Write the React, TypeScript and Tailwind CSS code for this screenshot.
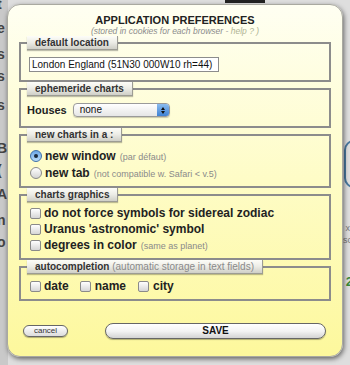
import React from 'react';

const FONT = { fontFamily: '"Liberation Sans", Arial, sans-serif' };

function Legend({ children }: { children: React.ReactNode }) {
  return (
    <legend className="h-[14px] px-[8px] text-[10px] font-bold leading-[14px] text-[#333] bg-gradient-to-b from-[#fdfdf8] via-[#ecece6] to-[#cfcfc7] border-b border-r border-[#9c9c94] shadow-[0_1px_1px_rgba(0,0,0,0.25)]">
      {children}
    </legend>
  );
}

function Radio({ checked }: { checked?: boolean }) {
  if (checked) {
    return (
      <span className="flex h-[12px] w-[12px] shrink-0 items-center justify-center rounded-full border border-[#3d6fa8] bg-gradient-to-b from-[#6aa6e6] to-[#b9dcf8]">
        <span className="h-[4px] w-[4px] rounded-full bg-[#1b2a3a]" />
      </span>
    );
  }
  return (
    <span className="h-[12px] w-[12px] shrink-0 rounded-full border border-[#8a8a8a] bg-gradient-to-b from-[#ffffff] to-[#d4d4d4]" />
  );
}

function Checkbox() {
  return (
    <span className="inline-block h-[11px] w-[11px] shrink-0 rounded-[2px] border border-[#8a8a8a] bg-gradient-to-b from-[#ffffff] to-[#d6d6d6]" />
  );
}

function Note({ children }: { children: React.ReactNode }) {
  return <span className="ml-[4px] text-[9px] font-normal text-[#8a8a8a]">{children}</span>;
}

export default function App() {
  const leftLetters = ['t', 'e', 's', 's', 's', 'B', '(', 'A', 'n', 'o'];
  const leftTops = [-6, 18, 44, 66, 95, 138, 160, 184, 210, 232];

  return (
    <div className="relative h-[365px] w-[350px] overflow-hidden bg-[#dedede]" style={FONT}>
      {/* underlying page, partly visible */}
      <div className="absolute left-0 top-0 h-[365px] w-[8px] bg-[#c9c9c9]" />
      {leftLetters.map((l, i) => (
        <span
          key={i}
          className="absolute left-[-3px] text-[14px] font-bold text-[#444]"
          style={{ top: leftTops[i] }}
        >
          {l}
        </span>
      ))}
      <div className="absolute left-[225px] top-0 h-[3px] w-[40px] bg-[#222]" />
      <div className="absolute right-[-14px] top-[140px] h-[48px] w-[20px] rounded-full border-2 border-[#4a7aa0]" />
      <span className="absolute right-[0px] top-[222px] text-[9px] text-[#777]">x</span>
      <span className="absolute right-[-2px] top-[234px] text-[9px] text-[#777]">sc</span>
      <span className="absolute right-[-3px] top-[272px] text-[13px] font-bold text-[#3a8a3a]">2</span>

      {/* dialog */}
      <div className="absolute left-[7px] top-[4px] flex h-[353px] w-[336px] flex-col rounded-[13px] border border-[#a9a9a0] bg-gradient-to-b from-[#fffff2] via-[#fefcc6] to-[#fdf89c] px-[11px] pt-[9px] shadow-[1px_2px_5px_rgba(0,0,0,0.55)]">
        <div className="text-center text-[11px] font-bold leading-[13px] text-[#222]">APPLICATION PREFERENCES</div>
        <div className="-mt-[1px] text-center text-[8.5px] italic leading-[10px] text-[#8c8c8c]">
          (stored in cookies for each browser - <span className="text-[#b0b494]">help ? )</span>
        </div>

        <fieldset className="border-2 border-[#8c8c8c] pl-[6px] pr-[8px] pb-[8px] pt-[7px]">
          <Legend>default location</Legend>
          <div className="ml-[2px] h-[15px] w-[190px] border border-[#8c8c8c] bg-white px-[2px] text-[10px] leading-[13px] text-[#111]">
            London England (51N30 000W10 rh=44)
          </div>
        </fieldset>

        <fieldset className="border-2 border-[#8c8c8c] pl-[6px] pr-[8px] pb-[8px] pt-[6px]">
          <Legend>ephemeride charts</Legend>
          <div className="flex h-[16px] items-center gap-[6px]">
            <span className="text-[11px] font-bold text-[#222]">Houses</span>
            <div className="flex h-[14px] w-[97px] items-center rounded-[4px] border border-[#9a9a9a] bg-gradient-to-b from-white to-[#e6e6e6] shadow-[0_1px_1px_rgba(0,0,0,0.2)]">
              <span className="flex-1 pl-[6px] text-[10px] leading-[12px] text-[#111]">none</span>
              <span className="flex h-full w-[12px] flex-col items-center justify-center gap-[1px] rounded-r-[3px] bg-gradient-to-b from-[#8bbcee] to-[#3f82d4]">
                <span className="h-0 w-0 border-x-[2.5px] border-b-[3px] border-x-transparent border-b-[#111]" />
                <span className="h-0 w-0 border-x-[2.5px] border-t-[3px] border-x-transparent border-t-[#111]" />
              </span>
            </div>
          </div>
        </fieldset>

        <fieldset className="border-2 border-[#8c8c8c] pl-[6px] pr-[8px] pb-[5px] pt-[5px]">
          <Legend>new charts in a :</Legend>
          <div className="ml-[3px] flex h-[17px] items-center gap-[3px] text-[12px] font-bold text-[#222]">
            <Radio checked />
            <span>new window<Note>(par défaut)</Note></span>
          </div>
          <div className="ml-[3px] flex h-[17px] items-center gap-[3px] text-[12px] font-bold text-[#222]">
            <Radio />
            <span>new tab<Note>(not compatible w. Safari &lt; v.5)</Note></span>
          </div>
        </fieldset>

        <fieldset className="border-2 border-[#8c8c8c] pl-[6px] pr-[8px] pb-[5px] pt-[3px]">
          <Legend>charts graphics</Legend>
          <div className="ml-[3px] flex h-[16px] items-center gap-[3px] text-[12px] font-bold text-[#222]">
            <Checkbox />
            <span>do not force symbols for sidereal zodiac</span>
          </div>
          <div className="ml-[3px] flex h-[16px] items-center gap-[3px] text-[12px] font-bold text-[#222]">
            <Checkbox />
            <span>Uranus 'astronomic' symbol</span>
          </div>
          <div className="ml-[3px] flex h-[16px] items-center gap-[3px] text-[12px] font-bold text-[#222]">
            <Checkbox />
            <span>degrees in color<Note>(same as planet)</Note></span>
          </div>
        </fieldset>

        <fieldset className="border-2 border-[#8c8c8c] pl-[6px] pr-[8px] pb-[5px] pt-[4px]">
          <Legend>
            autocompletion<span className="font-normal text-[#8a8a8a]"> (automatic storage in text fields)</span>
          </Legend>
          <div className="ml-[3px] flex h-[16px] items-center text-[12px] font-bold text-[#222]">
            <Checkbox />
            <span className="ml-[3px]">date</span>
            <span className="ml-[11px] flex"><Checkbox /></span>
            <span className="ml-[4px]">name</span>
            <span className="ml-[12px] flex"><Checkbox /></span>
            <span className="ml-[4px]">city</span>
          </div>
        </fieldset>

        <div className="mt-[22px] flex items-center justify-between pl-[4px] pr-[5px]">
          <button className="h-[12px] w-[45px] rounded-full border border-[#666] bg-gradient-to-b from-white to-[#dcdcdc] text-[8px] leading-[10px] text-[#333] shadow-[0_1px_1px_rgba(0,0,0,0.3)]">
            cancel
          </button>
          <button className="h-[16px] w-[221px] rounded-full border border-[#666] bg-gradient-to-b from-white via-[#f4f4f4] to-[#d4d4d4] text-[10px] font-bold leading-[14px] text-[#111] shadow-[0_1px_1px_rgba(0,0,0,0.3)]">
            SAVE
          </button>
        </div>
      </div>
    </div>
  );
}
